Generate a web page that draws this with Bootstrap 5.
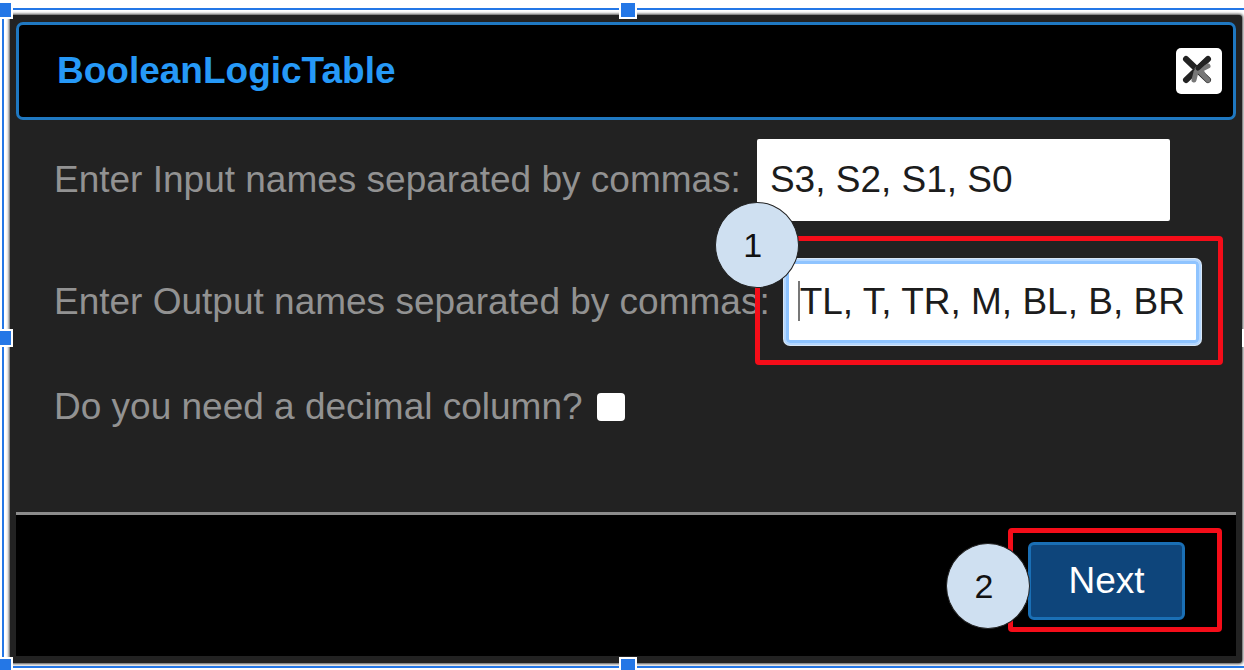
<!DOCTYPE html>
<html lang="en">
<head>
<meta charset="utf-8">
<meta name="viewport" content="width=device-width, initial-scale=1">
<title>BooleanLogicTable</title>
<link href="https://cdn.jsdelivr.net/npm/bootstrap@5.3.0/dist/css/bootstrap.min.css" rel="stylesheet">
<style>
  body { font-family: "Liberation Sans", Arial, sans-serif; font-size: 37px; line-height: 44px; background: #fff; }
  .stage { padding: 15px 2px 7px 10px; overflow: hidden; }
  .selection { position: absolute; inset: 8px -9px 2px 2px; border: 2px solid #2477e6; pointer-events: none; }
  .handle { position: absolute; width: 18px; height: 18px; background: #2477e6; border: 2px solid #fff; transform: translate(-50%, -50%); }
  .dialog { background: #222; padding: 7px 6px; border-radius: 3px; box-shadow: 0 0 3px 1px #444; }
  .dialog-head { background: #000; border: 3px solid #1f78c1; border-radius: 7px; padding: 23px 11px 23px 38px; min-height: 98px; }
  .dialog-title { color: #2699f7; font-size: 37px; line-height: 44px; }
  .close-btn { width: 46px; height: 46px; border-radius: 5px; background: #fff; }
  .dialog-main { padding: 19px 24px 40px 38px; gap: 40px; color: #929292; }
  .names-row { gap: 16px; }
  .check-row { gap: 14px; min-height: 48px; }
  .names-field { width: 413px; }
  .names-input { height: 82px; padding: 0 2px 0 13px; border: 0; border-radius: 2px; font-size: 37px; color: #1c1c1c; background: #fff; }
  .names-input:focus { color: #1c1c1c; box-shadow: none; }
  .names-input.active { border-radius: 4px; caret-color: transparent; box-shadow: inset 0 0 0 3px #8fc4ff, 0 0 0 2px #b4d7ff, 0 0 0 3px #d8e6f5; padding-left: 14px; }
  .caret { position: absolute; left: 12px; top: 20px; width: 2px; height: 40px; background: #777; }
  .tick { appearance: none; width: 28px; height: 28px; border-radius: 4px; background: #fff; }
  .dialog-foot { background: #000; border-top: 3px solid #8c8c8c; padding: 27px 51px 36px; }
  .next-btn, .next-btn:hover { width: 157px; height: 78px; padding: 0; background: #0e457b; border: 3px solid #1a6fb5; border-radius: 6px; color: #fff; font-size: 37px; line-height: 44px; }
  .callout { position: absolute; border: 5px solid #f50d19; border-radius: 4px; pointer-events: none; }
  .callout-input { inset: -25px -24px -22px -31px; }
  .callout-next { inset: -14px -37px -12px -20px; }
  .step { position: absolute; width: 84px; height: 86px; border-radius: 50%; background: #cfe0f1; border: 1px solid #222; color: #111; font-size: 34px; padding-right: 8px; }
  .step-one { left: -71px; top: -59px; }
  .step-two { left: -82px; top: 1px; }
</style>
</head>
<body>
<main class="stage position-relative min-vh-100 d-flex">
  <section class="dialog flex-grow-1 d-flex flex-column" role="dialog" aria-labelledby="dialogTitle">
    <header class="dialog-head d-flex align-items-center justify-content-between">
      <h1 class="dialog-title fw-bold m-0" id="dialogTitle">BooleanLogicTable</h1>
      <button type="button" class="close-btn border-0 p-0 d-flex align-items-center justify-content-center" aria-label="Close">
        <svg width="46" height="46" viewBox="0 0 46 46" fill="none" stroke-linecap="round">
          <path d="M10 11 32 32M32 11 10 32" stroke="#222" stroke-width="6"/>
          <path d="M20 24 32 18M20 24 18 32M21 21 32 32M24 21 29 29" stroke="#777" stroke-width="5"/>
          <path d="M22 20 32 11" stroke="#222" stroke-width="5"/>
        </svg>
      </button>
    </header>
    <form class="dialog-main flex-grow-1 d-flex flex-column">
      <div class="names-row d-flex align-items-center">
        <label for="inputNames">Enter Input names separated by commas:</label>
        <div class="names-field"><input class="names-input form-control" id="inputNames" type="text" value="S3, S2, S1, S0"></div>
      </div>
      <div class="names-row d-flex align-items-center">
        <label for="outputNames">Enter Output names separated by commas:</label>
        <div class="names-field position-relative">
          <input class="names-input active form-control" id="outputNames" type="text" value="TL, T, TR, M, BL, B, BR">
          <span class="caret"></span>
          <span class="callout callout-input"></span>
          <span class="step step-one d-flex align-items-center justify-content-center">1</span>
        </div>
      </div>
      <div class="check-row d-flex align-items-center">
        <label for="decimal">Do you need a decimal column?</label>
        <input class="tick" id="decimal" type="checkbox">
      </div>
    </form>
    <footer class="dialog-foot d-flex justify-content-end">
      <div class="position-relative">
        <button type="button" class="next-btn btn">Next</button>
        <span class="callout callout-next"></span>
        <span class="step step-two d-flex align-items-center justify-content-center">2</span>
      </div>
    </footer>
  </section>
  <div class="selection" aria-hidden="true">
    <span class="handle top-0 start-0"></span>
    <span class="handle top-0 start-50"></span>
    <span class="handle top-50 start-0"></span>
    <span class="handle top-50 start-100"></span>
    <span class="handle top-100 start-0"></span>
    <span class="handle top-100 start-50"></span>
  </div>
</main>
<script src="https://cdn.jsdelivr.net/npm/bootstrap@5.3.0/dist/js/bootstrap.bundle.min.js"></script>
</body>
</html>
